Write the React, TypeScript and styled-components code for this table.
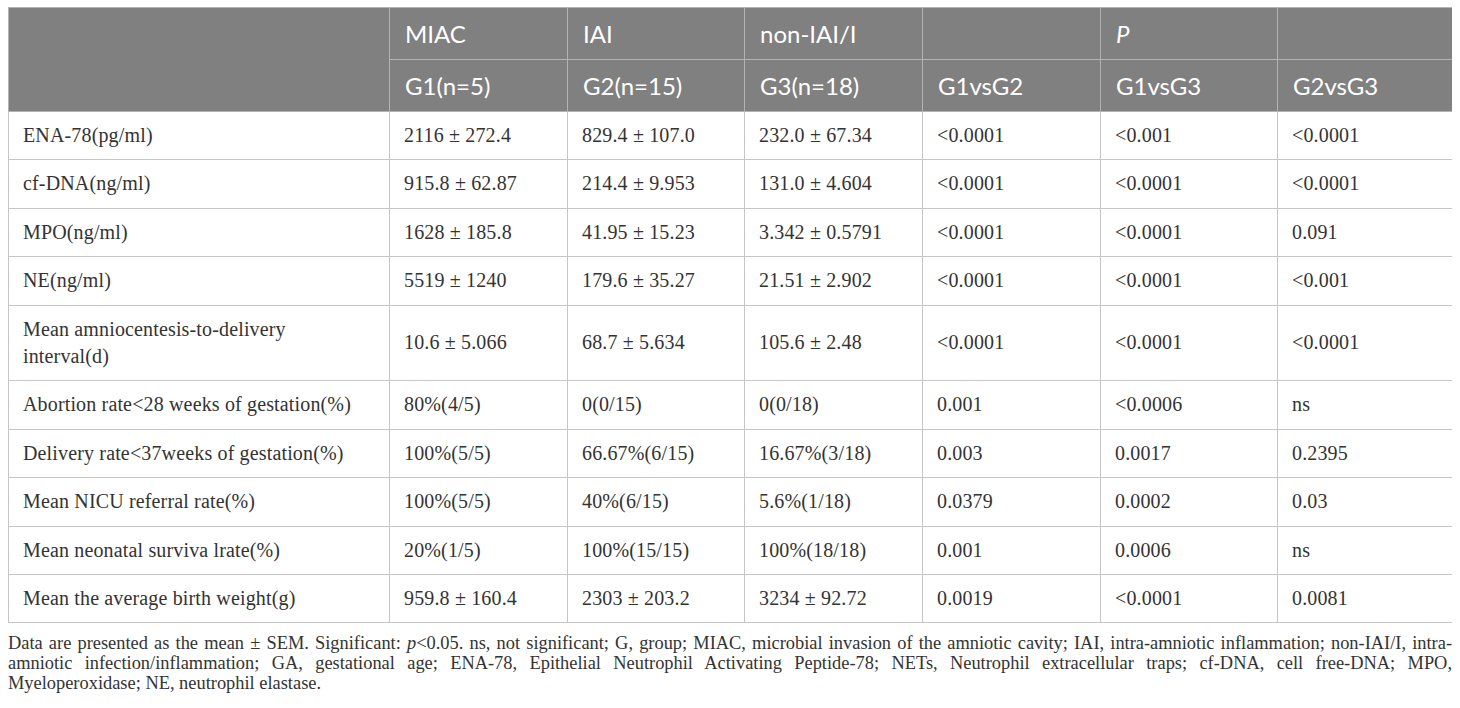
import styled, { createGlobalStyle } from 'styled-components';

const GlobalStyle = createGlobalStyle`
  body {
    margin: 7px 8px;
    background: #ffffff;
  }
`;

type Row = {
  label: string;
  values: string[];
};

const Table = styled.table`
  width: 100%;
  table-layout: fixed;
  border-collapse: collapse;
  border: 1px solid #c6c6c6;
`;

const HeadCell = styled.th<{ $italic?: boolean }>`
  background: #7f807f;
  color: #ffffff;
  font-family: Lato, 'Open Sans', sans-serif;
  font-size: 24px;
  font-weight: 400;
  font-style: ${(props) => (props.$italic ? 'italic' : 'normal')};
  line-height: 28px;
  text-align: left;
  padding: 11.5px 15px;
  border: 1px solid #b3b3b3;
`;

const BodyCell = styled.td`
  color: #333333;
  font-family: 'Liberation Serif', 'Times New Roman', serif;
  font-size: 20px;
  letter-spacing: 0.15px;
  line-height: 27.4px;
  padding: 10px 14px;
  border: 1px solid #c6c6c6;
  vertical-align: middle;
`;

const Footnote = styled.div`
  margin-top: 10px;
  color: #333333;
  font-family: 'Liberation Serif', 'Times New Roman', serif;
  font-size: 18.4px;
  line-height: 20px;
`;

const NoteLine = styled.div<{ $justify?: boolean }>`
  text-align: ${(props) => (props.$justify ? 'justify' : 'left')};
  text-align-last: ${(props) => (props.$justify ? 'justify' : 'left')};
`;

const widths = [381, 178, 177, 178, 178, 177, 175];

const rows: Row[] = [
  { label: 'ENA-78(pg/ml)', values: ['2116 ± 272.4', '829.4 ± 107.0', '232.0 ± 67.34', '<0.0001', '<0.001', '<0.0001'] },
  { label: 'cf-DNA(ng/ml)', values: ['915.8 ± 62.87', '214.4 ± 9.953', '131.0 ± 4.604', '<0.0001', '<0.0001', '<0.0001'] },
  { label: 'MPO(ng/ml)', values: ['1628 ± 185.8', '41.95 ± 15.23', '3.342 ± 0.5791', '<0.0001', '<0.0001', '0.091'] },
  { label: 'NE(ng/ml)', values: ['5519 ± 1240', '179.6 ± 35.27', '21.51 ± 2.902', '<0.0001', '<0.0001', '<0.001'] },
  {
    label: 'Mean amniocentesis-to-delivery interval(d)',
    values: ['10.6 ± 5.066', '68.7 ± 5.634', '105.6 ± 2.48', '<0.0001', '<0.0001', '<0.0001'],
  },
  { label: 'Abortion rate<28 weeks of gestation(%)', values: ['80%(4/5)', '0(0/15)', '0(0/18)', '0.001', '<0.0006', 'ns'] },
  {
    label: 'Delivery rate<37weeks of gestation(%)',
    values: ['100%(5/5)', '66.67%(6/15)', '16.67%(3/18)', '0.003', '0.0017', '0.2395'],
  },
  { label: 'Mean NICU referral rate(%)', values: ['100%(5/5)', '40%(6/15)', '5.6%(1/18)', '0.0379', '0.0002', '0.03'] },
  { label: 'Mean neonatal surviva lrate(%)', values: ['20%(1/5)', '100%(15/15)', '100%(18/18)', '0.001', '0.0006', 'ns'] },
  {
    label: 'Mean the average birth weight(g)',
    values: ['959.8 ± 160.4', '2303 ± 203.2', '3234 ± 92.72', '0.0019', '<0.0001', '0.0081'],
  },
];

const App = () => {
  return (
    <>
      <GlobalStyle />
      <Table>
        <colgroup>
          {widths.map((w, i) => (
            <col key={i} style={{ width: w }} />
          ))}
        </colgroup>
        <thead>
          <tr>
            <HeadCell rowSpan={2} />
            <HeadCell>MIAC</HeadCell>
            <HeadCell>IAI</HeadCell>
            <HeadCell>non-IAI/I</HeadCell>
            <HeadCell />
            <HeadCell $italic>P</HeadCell>
            <HeadCell />
          </tr>
          <tr>
            <HeadCell>G1(n=5)</HeadCell>
            <HeadCell>G2(n=15)</HeadCell>
            <HeadCell>G3(n=18)</HeadCell>
            <HeadCell>G1vsG2</HeadCell>
            <HeadCell>G1vsG3</HeadCell>
            <HeadCell>G2vsG3</HeadCell>
          </tr>
        </thead>
        <tbody>
          {rows.map((r) => (
            <tr key={r.label}>
              <BodyCell>{r.label}</BodyCell>
              {r.values.map((v, i) => (
                <BodyCell key={i}>{v}</BodyCell>
              ))}
            </tr>
          ))}
        </tbody>
      </Table>
      <Footnote>
        <NoteLine $justify>
          Data are presented as the mean ± SEM. Significant: <i>p</i>&lt;0.05. ns, not significant; G, group; MIAC,
          microbial invasion of the amniotic cavity; IAI, intra-amniotic inflammation; non-IAI/I, intra-
        </NoteLine>
        <NoteLine $justify>
          amniotic infection/inflammation; GA, gestational age; ENA-78, Epithelial Neutrophil Activating Peptide-78;
          NETs, Neutrophil extracellular traps; cf-DNA, cell free-DNA; MPO,
        </NoteLine>
        <NoteLine>Myeloperoxidase; NE, neutrophil elastase.</NoteLine>
      </Footnote>
    </>
  );
};

export default App;
